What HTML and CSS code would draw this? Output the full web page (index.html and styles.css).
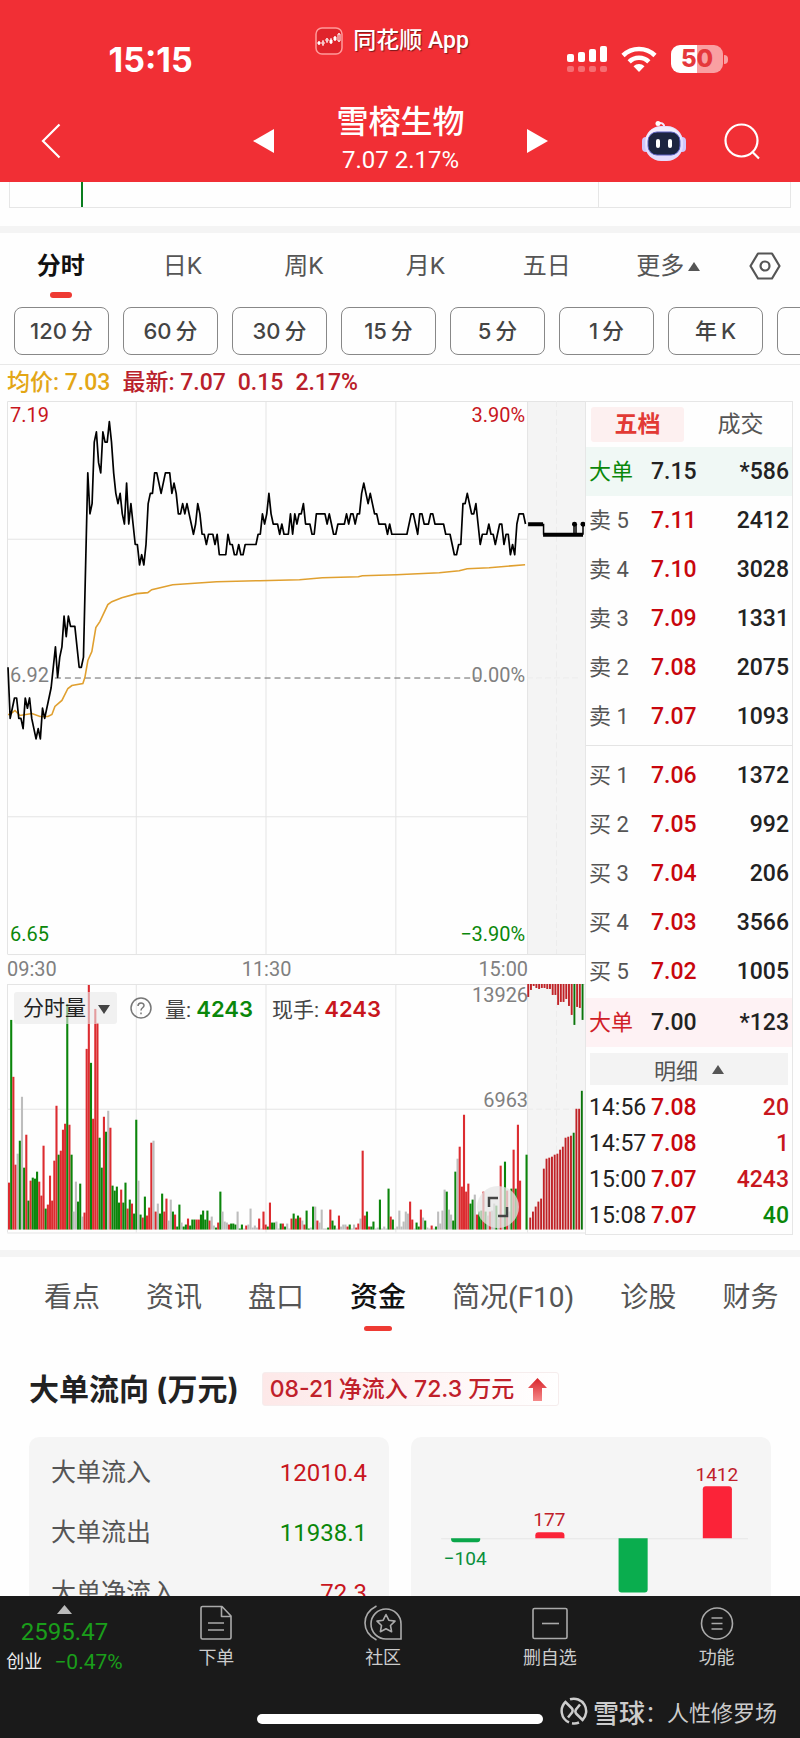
FILE: index.html
```html
<!DOCTYPE html>
<html lang="zh-CN">

<head>
  <meta charset="UTF-8">
  <meta name="viewport" content="width=device-width, initial-scale=1.0">
  <title>雪榕生物</title>
  <link rel="stylesheet" href="styles.css">
</head>

<body>
  <header class="header">
    <div class="status-bar">
      <span class="clock">15:15</span>
      <span class="app-label">
        <svg width="28" height="28" viewBox="0 0 28 28" fill="none">
          <rect x="1" y="1" width="26" height="26" rx="6" fill="#e0242b" stroke="#ff9a9a" stroke-width="1.5" />
          <g stroke="#fff" stroke-width="1">
            <path d="M4 14v4M8 13v6M12 11v5M16 11v6M20 9v5M24 6v9" />
            <path d="M3 15h2v2H3zM15 13h2v3h-2zM19 10h2v3h-2z" fill="#fff" />
            <path d="M7 15h2v2H7zM11 12h2v2h-2zM23 7h2v7h-2z" fill="#e0242b" />
          </g>
        </svg>
        同花顺 App
      </span>
      <span class="status-icons">
        <svg width="40" height="28" viewBox="0 0 40 28" fill="#fff">
          <rect x="0" y="9" width="7" height="8" rx="2" />
          <rect x="11" y="7" width="7" height="10" rx="2" />
          <rect x="22" y="4" width="7" height="13" rx="2" />
          <rect x="33" y="1" width="7" height="16" rx="2" />
          <g opacity=".3">
            <rect x="0" y="21" width="7" height="6" rx="2" />
            <rect x="11" y="21" width="7" height="6" rx="2" />
            <rect x="22" y="21" width="7" height="6" rx="2" />
            <rect x="33" y="21" width="7" height="6" rx="2" />
          </g>
        </svg>
        <svg width="36" height="28" viewBox="0 0 36 28" fill="none" stroke="#fff" stroke-width="4.6">
          <path d="M2 10.5a23 23 0 0 1 32 0" />
          <path d="M8.2 16.8a14 14 0 0 1 19.6 0" />
          <path d="M18 27l-5.5-5.7a8 8 0 0 1 11 0z" fill="#fff" stroke="none" />
        </svg>
        <span class="battery"><span class="battery-body">50</span></span>
      </span>
    </div>
    <nav class="title-bar">
      <button class="icon-button back" aria-label="返回">
        <svg width="20" height="36" viewBox="0 0 20 36" fill="none" stroke="#fff" stroke-width="2.2">
          <path d="M18.500 1.500L2 18l16.500 16.500" />
        </svg>
      </button>
      <div class="stock">
        <button class="icon-button" aria-label="上一只">
          <svg width="21" height="24" viewBox="0 0 21 24" fill="#fff"><path d="M0 12L21 0v24z" /></svg>
        </button>
        <div class="stock-title">
          <h1>雪榕生物</h1>
          <p>7.07 2.17%</p>
        </div>
        <button class="icon-button" aria-label="下一只">
          <svg width="21" height="24" viewBox="0 0 21 24" fill="#fff"><path d="M21 12L0 0v24z" /></svg>
        </button>
      </div>
      <div class="title-actions">
        <button class="icon-button" aria-label="助手">
          <svg width="44" height="42" viewBox="0 0 44 42">
            <path d="M22 8c1-5-4-6-6-4" fill="none" stroke="#f3e9ff" stroke-width="2" />
            <circle cx="16" cy="3.500" r="2.500" fill="#fff" />
            <rect x="0" y="17" width="8" height="15" rx="4" fill="#cfc6fb" />
            <rect x="36" y="17" width="8" height="15" rx="4" fill="#cfc6fb" />
            <rect x="3" y="6" width="38" height="35" rx="16" fill="#e4dcfd" />
            <rect x="4" y="7" width="35" height="28" rx="14" fill="#f2eefe" />
            <rect x="6" y="12" width="32" height="23" rx="9" fill="#1c2440" stroke="#5a5fc0" stroke-width="1" />
            <rect x="14" y="19" width="4" height="9" rx="2" fill="#fff" />
            <rect x="26" y="19" width="4" height="9" rx="2" fill="#fff" />
          </svg>
        </button>
        <button class="icon-button" aria-label="搜索">
          <svg width="36" height="37" viewBox="0 0 36 37" fill="none" stroke="#fff" stroke-width="2.2">
            <circle cx="17.500" cy="17.500" r="16" />
            <path d="M28 28.500l7 7" />
          </svg>
        </button>
      </div>
    </nav>
  </header>

  <main class="content">
    <div class="preview">
      <div class="preview-left"><span class="preview-bar"></span></div>
      <div class="preview-right"></div>
    </div>

    <nav class="period-tabs">
      <button class="period active">分时</button>
      <button class="period">日K</button>
      <button class="period">周K</button>
      <button class="period">月K</button>
      <button class="period">五日</button>
      <button class="period">更多<svg class="caret" width="12" height="9" viewBox="0 0 12 9"><path d="M6 0l6 9H0z" fill="#555" /></svg></button>
      <button class="icon-button settings" aria-label="设置">
        <svg width="32" height="28" viewBox="0 0 32 28" fill="none" stroke="#555" stroke-width="2.200">
          <path d="M9 1.500h14L30.500 14 23 26.500H9L1.500 14z" stroke-linejoin="round" />
          <circle cx="16" cy="14" r="4.500" />
        </svg>
      </button>
    </nav>

    <div class="chips">
      <button class="chip">120<span>分</span></button>
      <button class="chip">60<span>分</span></button>
      <button class="chip">30<span>分</span></button>
      <button class="chip">15<span>分</span></button>
      <button class="chip">5<span>分</span></button>
      <button class="chip">1<span>分</span></button>
      <button class="chip">年<span>K</span></button>
      <button class="chip" aria-label="更多周期"></button>
    </div>

    <p class="summary">
      <span class="average">均价: 7.03</span>
      <span>最新: 7.07</span>
      <span>0.15</span>
      <span>2.17%</span>
    </p>

    <section class="market">
      <div class="chart">
        <svg class="chart-svg" id="chart" viewBox="0 0 579 834">
          <rect x="521" y="0" width="58" height="554" fill="#f4f4f4" />
          <rect x="521" y="584" width="58" height="246" fill="#f4f4f4" />
          <g fill="none" stroke="#e4e4e4" stroke-width="1">
            <path d="M.5 .5H579M.5 138.500H521M.5 416.500H521M.5 554.500H579M.5 584.500H579M.5 709.500H521M.5 833.500H579" />
            <path d="M.5 .5V554M129.500 .5V554M259.500 .5V554M389.500 .5V554M521.500 .5V554" />
            <path d="M.5 584V833M129.500 584V833M259.500 584V833M389.500 584V833M521.500 584V833" />
            <path d="M521 277.500H575M521 709.500H575M550.500 0V554M550.500 584V830" stroke="#ececec" stroke-dasharray="6 3" />
          </g>
          <path d="M48 277.500H473" stroke="#666" stroke-width="1" stroke-dasharray="6 4" />
          <g id="volume"></g>
          <path fill="none" stroke="#e0a030" stroke-width="1.600" d="M1 314l2 0 5-4 5 5 12-2 8 3h8l4-2 3-8 7-6 6-12 4-3 11-2 2-6 3-17 4-9 4-24 4-6 8-17 4-3 10-4 15-4 11-1 4-3 21-5 44-3 43-1 40-1 23-2 36-1 4-1 34-1 43-2 20-2 8-2 22-1 36-3" />
          <path id="price" fill="none" stroke="#000" stroke-width="1.700" stroke-linejoin="round" />
          <path d="M522 123.500H537M537 134H577" fill="none" stroke="#000" stroke-width="4" />
          <path d="M537.500 123V134M568 123V134M570 123V134M577 123V134" fill="none" stroke="#000" stroke-width="1.500" />
          <circle cx="568.500" cy="123.500" r="2.500" />
          <circle cx="577" cy="123.500" r="2.500" />
          <g class="axis">
            <text class="up" x="3" y="21">7.19</text>
            <text class="up end" x="519" y="21">3.90%</text>
            <text x="3" y="281">6.92</text>
            <text class="end" x="519" y="281">0.00%</text>
            <text class="down" x="3" y="541">6.65</text>
            <text class="down end" x="519" y="541">−3.90%</text>
            <text x="0" y="576">09:30</text>
            <text class="middle" x="260" y="576">11:30</text>
            <text class="end" x="522" y="576">15:00</text>
            <text class="end" x="522" y="602">13926</text>
            <text class="end" x="522" y="707">6963</text>
          </g>
        </svg>

        <div class="indicator">
          <span class="select-wrap">
            <select class="indicator-select" aria-label="指标">
              <option>分时量</option>
            </select>
            <svg class="select-arrow" width="12" height="9" viewBox="0 0 12 9"><path d="M0 0h12L6 9z" fill="#444" /></svg>
          </span>
          <button class="icon-button" aria-label="说明">
            <svg width="22" height="22" viewBox="0 0 22 22" fill="none" stroke="#777" stroke-width="1.500">
              <circle cx="11" cy="11" r="10" />
              <path d="M8 9c0-4 6-4 6-.5 0 2.500-3 2-3 5M11 15.500v1.800" />
            </svg>
          </button>
          <span class="reading">量: <b class="down">4243</b></span>
          <span class="reading">现手: <b class="up">4243</b></span>
        </div>

        <button class="expand" aria-label="全屏">
          <svg width="22" height="22" viewBox="0 0 22 22" fill="none" stroke="#444" stroke-width="2.500">
            <path d="M2 11V2h9M20 11v9h-9" />
          </svg>
        </button>
      </div>

      <aside class="book">
        <div class="book-tabs">
          <button class="book-tab active">五档</button>
          <button class="book-tab">成交</button>
        </div>
        <table class="orders">
          <tbody>
            <tr class="big-sell"><th>大单</th><td>7.15</td><td>*586</td></tr>
            <tr><th>卖 5</th><td>7.11</td><td>2412</td></tr>
            <tr><th>卖 4</th><td>7.10</td><td>3028</td></tr>
            <tr><th>卖 3</th><td>7.09</td><td>1331</td></tr>
            <tr><th>卖 2</th><td>7.08</td><td>2075</td></tr>
            <tr><th>卖 1</th><td>7.07</td><td>1093</td></tr>
          </tbody>
        </table>
        <table class="orders bids">
          <tbody>
            <tr><th>买 1</th><td>7.06</td><td>1372</td></tr>
            <tr><th>买 2</th><td>7.05</td><td>992</td></tr>
            <tr><th>买 3</th><td>7.04</td><td>206</td></tr>
            <tr><th>买 4</th><td>7.03</td><td>3566</td></tr>
            <tr><th>买 5</th><td>7.02</td><td>1005</td></tr>
          </tbody>
        </table>
        <table class="orders big-bid">
          <tbody>
            <tr class="big-buy"><th>大单</th><td>7.00</td><td>*123</td></tr>
          </tbody>
        </table>
        <button class="detail-button">明细
          <svg width="12" height="9" viewBox="0 0 12 9"><path d="M6 0l6 9H0z" fill="#555" /></svg>
        </button>
        <table class="orders trades">
          <tbody>
            <tr><th>14:56</th><td>7.08</td><td class="up">20</td></tr>
            <tr><th>14:57</th><td>7.08</td><td class="up">1</td></tr>
            <tr><th>15:00</th><td>7.07</td><td class="up">4243</td></tr>
            <tr><th>15:08</th><td>7.07</td><td class="down">40</td></tr>
          </tbody>
        </table>
      </aside>
    </section>

    <nav class="info-tabs">
      <a href="#">看点</a>
      <a href="#">资讯</a>
      <a href="#">盘口</a>
      <a href="#" class="active">资金</a>
      <a href="#">简况(F10)</a>
      <a href="#">诊股</a>
      <a href="#">财务</a>
    </nav>

    <section class="flow">
      <div class="flow-head">
        <h2>大单流向 (万元)</h2>
        <span class="flow-badge">08-21 净流入 72.3 万元
          <svg width="19" height="23" viewBox="0 0 19 23">
            <defs>
              <linearGradient id="arrow" x1="0" y1="0" x2="0" y2="1">
                <stop offset="0" stop-color="#d8232a" />
                <stop offset="1" stop-color="#f58a8a" />
              </linearGradient>
            </defs>
            <path d="M9.500 0L19 10h-5v13H5V10H0z" fill="url(#arrow)" />
          </svg>
        </span>
      </div>
      <div class="cards">
        <dl class="card flow-list">
          <div><dt>大单流入</dt><dd class="up">12010.4</dd></div>
          <div><dt>大单流出</dt><dd class="down">11938.1</dd></div>
          <div><dt>大单净流入</dt><dd class="up">72.3</dd></div>
        </dl>
        <div class="card">
          <svg class="flow-chart" viewBox="0 0 359 170">
            <path d="M30 101.500H336" stroke="#e6e6e6" />
            <path d="M40 101h29v1q0 3-3 3H43q-3 0-3-3z" fill="#0aa64a" />
            <path d="M124 101v-3q0-3 3-3h23q3 0 3 3v3z" fill="#fb2338" />
            <path d="M207 101h29v51q0 3-3 3h-23q-3 0-3-3z" fill="#0aad4e" />
            <path d="M291 101V52q0-3 3-3h23q3 0 3 3v49z" fill="#fb2338" />
            <text class="green" x="54" y="128">−104</text>
            <text x="138" y="89">177</text>
            <text x="305" y="44">1412</text>
          </svg>
        </div>
      </div>
    </section>
  </main>

  <footer class="footer">
    <nav class="bottom-nav">
      <a href="#" class="index">
        <svg width="15" height="9" viewBox="0 0 15 9"><path d="M7.500 0L15 9H0z" fill="#bbb" /></svg>
        <span class="index-value">2595.47</span>
        <span class="index-row">创业 <span class="index-change">−0.47%</span></span>
      </a>
      <a href="#" class="nav-item">
        <svg width="36" height="36" viewBox="0 0 36 36" fill="none" stroke="#aaa" stroke-width="1.600" stroke-linejoin="round">
          <path d="M3 3q0-1.500 1.500-1.500H24L33 11v21.500q0 1.500-1.500 1.500h-27Q3 34 3 32.500zM23.500 2v9.500H33M10 18h16M10 25h16" />
        </svg>
        下单
      </a>
      <a href="#" class="nav-item">
        <svg width="38" height="36" viewBox="0 0 38 36" fill="none" stroke="#aaa" stroke-width="1.600">
          <path d="M12.500 1Q1 7 1 18t11.500 17M22 4a15 15 0 0 1 15 15v15H22a15 15 0 0 1 0-30z" />
          <path d="M22 9.500l2.800 5.700 6.200.9-4.500 4.400 1.100 6.200-5.600-3-5.600 3 1.100-6.200-4.500-4.400 6.200-.9z" stroke-linejoin="round" />
        </svg>
        社区
      </a>
      <a href="#" class="nav-item">
        <svg width="36" height="36" viewBox="0 0 36 36" fill="none" stroke="#aaa" stroke-width="1.600">
          <rect x="1" y="3.500" width="34" height="30" rx="1.500" />
          <path d="M10 18.500h17" />
        </svg>
        删自选
      </a>
      <a href="#" class="nav-item">
        <svg width="36" height="36" viewBox="0 0 36 36" fill="none" stroke="#aaa" stroke-width="1.600">
          <circle cx="18" cy="18.500" r="15.500" />
          <path d="M12.500 13h11M12.500 18.500h11M12.500 24h11" />
        </svg>
        功能
      </a>
    </nav>
    <div class="footer-bottom">
      <span class="home-bar"></span>
      <span class="watermark">
        <svg width="28" height="28" viewBox="0 0 28 28" fill="none" stroke="#ccc" stroke-width="2.500">
          <path d="M9 25.400A12.500 12.500 0 0 1 5.500 5L11.500 11q2 2 .5 4.500l-4 5" />
          <path d="M10 2.200A12.500 12.500 0 0 1 22.500 23L16.500 17q-2-2-.5-4.500l4-5M19 25.500a12.500 12.500 0 0 1-7 .8" />
        </svg>
        <b>雪球</b>：人性修罗场
      </span>
    </div>
  </footer>

  <script src="chart.js"></script>
</body>

</html>
```
FILE: styles.css
```css
* {
  box-sizing: border-box;
}

body {
  display: flex;
  flex-direction: column;
  height: 100vh;
  margin: 0;
  background-color: #fefefe;
  color: #222;
  font-family: Roboto, "Noto Sans CJK SC", sans-serif;
  font-size: 22px;
}

h1, h2, p, dl, dd {
  margin: 0;
}

button {
  padding: 0;
  border: none;
  background: none;
  color: inherit;
  font: inherit;
  cursor: pointer;
}

a {
  color: inherit;
  text-decoration: none;
}

svg {
  display: block;
}

.up {
  color: #c8161d;
  fill: #c8161d;
}

.down {
  color: #0a870a;
  fill: #0a870a;
}

/* header */

.header {
  flex: none;
  background-color: #f12f35;
  color: #fff;
}

.status-bar {
  display: grid;
  grid-template-columns: 1fr auto 1fr;
  height: 86px;
  padding: 24px 16px 0 0;
}

.clock {
  padding: 16px 14px 0 0;
  font-family: Inter, sans-serif;
  font-size: 34px;
  font-weight: 700;
  line-height: 40px;
  text-align: center;
}

.app-label {
  display: flex;
  gap: 10px;
  height: 34px;
  align-items: center;
  font-size: 23px;
  font-weight: 500;
  line-height: 30px;
  text-shadow: 1px 1px 1px #7a1a1c;
}

.status-icons {
  display: flex;
  justify-content: flex-end;
  gap: 14px;
  padding: 21px 56px 0 0;
}

.battery {
  display: flex;
  align-items: center;
  gap: 1px;
  height: 28px;
}

.battery::after {
  content: "";
  width: 4px;
  height: 9px;
  border-radius: 0 4px 4px 0;
  background-color: #f9a0a2;
}

.battery-body {
  width: 52px;
  border-radius: 9px;
  background: linear-gradient(90deg, #fff 50%, #f9a0a2 50%);
  color: #e5383c;
  font-family: Inter, sans-serif;
  font-size: 24px;
  font-weight: 800;
  line-height: 28px;
  text-align: center;
}

.title-bar {
  display: grid;
  grid-template-columns: 1fr 296px 1fr;
  align-items: center;
  height: 96px;
  padding: 16px 40px 2px 41px;
}

.stock {
  display: flex;
  align-items: center;
  justify-content: space-between;
}

.stock-title {
  text-align: center;
}

.stock h1 {
  font-size: 32px;
  font-weight: 500;
  line-height: 38px;
}

.stock p {
  font-size: 24px;
  line-height: 38px;
}

.title-actions {
  display: flex;
  align-items: center;
  justify-content: flex-end;
  gap: 38px;
}

/* content */

.content {
  flex: 1;
  min-height: 0;
  overflow: hidden;
}

.preview {
  display: grid;
  grid-template-columns: 589fr 191fr;
  height: 26px;
  margin: 0 9px 18px;
  border: 1px solid #e6e6e6;
  border-top: none;
}

.preview-left {
  padding-left: 71px;
  border-right: 1px solid #e6e6e6;
}

.preview-bar {
  display: block;
  width: 2px;
  height: 25px;
  background-color: #0a7d1e;
}

.period-tabs {
  display: grid;
  grid-template-columns: repeat(6, 1fr) 71px;
  padding-top: 17px;
  border-top: 7px solid #f4f4f4;
}

.period {
  display: flex;
  justify-content: center;
  align-items: center;
  height: 32px;
  margin-bottom: 16px;
  color: #555;
  font-size: 24px;
  line-height: 32px;
}

.period.active {
  position: relative;
  color: #111;
  font-weight: 700;
}

.period.active::after {
  content: "";
  position: absolute;
  top: 42px;
  width: 22px;
  height: 6px;
  border-radius: 3px;
  background-color: #ee3a33;
}

.caret {
  margin-left: 4px;
}

.settings {
  display: grid;
  place-items: center;
  height: 32px;
}

.chips {
  display: flex;
  gap: 14px;
  padding: 9px 0 9px 14px;
  overflow: hidden;
  border-bottom: 1px solid #e8e8e8;
}

.chip {
  display: flex;
  flex: 0 0 95px;
  align-items: center;
  justify-content: center;
  gap: 4px;
  height: 48px;
  border: 1px solid #888;
  border-radius: 8px;
  color: #444;
  font-family: Inter, "Noto Sans CJK SC", sans-serif;
  font-weight: 500;
  line-height: 30px;
}

.summary {
  display: flex;
  gap: 12px;
  padding-left: 7px;
  color: #b9202a;
  font-family: Roboto, "Noto Sans CJK SC", sans-serif;
  font-size: 23px;
  font-weight: 500;
  line-height: 36px;
}

.average {
  color: #e3a615;
}

.market {
  display: grid;
  grid-template-columns: minmax(0, 1fr) 208px;
  padding: 0 7px 15px 7px;
}

.chart {
  position: relative;
}

.chart-svg {
  width: 100%;
}

.axis {
  font-size: 20px;
}

.axis text:not(.up, .down) {
  fill: #808080;
}

.axis .end {
  text-anchor: end;
}

.axis .middle {
  text-anchor: middle;
}

.indicator {
  position: absolute;
  top: 590px;
  left: 7px;
  display: flex;
  align-items: center;
  gap: 13px;
  height: 34px;
  color: #444;
  font-size: 21px;
}

.reading {
  padding-right: 6px;
}

.indicator b {
  font-family: Inter, sans-serif;
  font-size: 22px;
  font-weight: 600;
}

.select-wrap {
  position: relative;
}

.indicator-select {
  width: 103px;
  height: 32px;
  padding: 0 0 0 9px;
  border: none;
  border-radius: 3px;
  background-color: rgba(232, 232, 232, 0.6);
  color: #222;
  font: inherit;
  appearance: none;
}

.select-arrow {
  position: absolute;
  top: 13px;
  right: 7px;
  pointer-events: none;
}

.expand {
  position: absolute;
  right: 66px;
  bottom: 7px;
  display: grid;
  place-items: center;
  width: 42px;
  height: 42px;
  border-radius: 50%;
  background-color: rgba(230, 230, 230, 0.75);
}

.book {
  border: 1px solid #e6e6e6;
}

.book-tabs {
  display: flex;
  gap: 10px;
  padding: 5px;
  font-size: 23px;
}

.book-tab {
  flex: 1;
  height: 35px;
  border-radius: 3px;
  color: #555;
  line-height: 35px;
}

.book-tab.active {
  background-color: #fdf0f0;
  color: #e23a35;
  font-weight: 700;
}

.orders {
  width: 100%;
  border-spacing: 0;
  table-layout: fixed;
  font-size: 23px;
}

.orders th,
.orders td {
  height: 49px;
  padding: 0;
  font-weight: 500;
  line-height: 30px;
  text-align: left;
}

.orders th {
  width: 65px;
  padding-left: 3px;
  color: #555;
  font-size: 22px;
  font-weight: 400;
}

.orders td:nth-child(2) {
  width: 52px;
  color: #c8060d;
}

.orders td:last-child {
  padding-right: 3px;
  text-align: right;
}

.orders .big-sell {
  background-color: #f0f8f5;
}

.orders .big-buy {
  background-color: #fef2f4;
}

.orders .big-sell th {
  color: #0a870a;
}

.orders .big-buy th {
  color: #d02027;
}

.orders .big-sell td:nth-child(2),
.orders .big-buy td:nth-child(2) {
  color: #222;
}

.bids {
  margin-top: 4px;
  padding-top: 5px;
  border-top: 1px solid #e4e4e4;
}

.big-bid {
  margin-top: 2px;
}

.detail-button {
  display: flex;
  align-items: center;
  justify-content: center;
  gap: 14px;
  width: calc(100% - 8px);
  height: 32px;
  margin: 6px 4px 5px;
  background-color: #f3f3f3;
  color: #555;
}

.orders.trades th,
.orders.trades td {
  height: 36px;
}

.orders.trades th {
  color: #222;
  font-size: 23px;
}

/* info tabs */

.info-tabs {
  display: flex;
  gap: 46px;
  padding: 23px 0 15px 44px;
  overflow: hidden;
  border-top: 7px solid #f4f4f4;
  color: #555;
  font-size: 28px;
  line-height: 36px;
  white-space: nowrap;
}

.info-tabs .active {
  position: relative;
  color: #111;
  font-weight: 500;
}

.info-tabs .active::after {
  content: "";
  position: absolute;
  top: 46px;
  left: calc(50% - 14px);
  width: 28px;
  height: 5px;
  border-radius: 3px;
  background-color: #ee3a33;
}

/* capital flow */

.flow {
  padding: 41px 29px 0;
}

.flow-head {
  display: flex;
  align-items: center;
  gap: 23px;
}

.flow-head h2 {
  font-family: Inter, "Noto Sans CJK SC", sans-serif;
  font-size: 30px;
  font-weight: 700;
  line-height: 34px;
}

.flow-badge {
  display: flex;
  align-items: center;
  gap: 14px;
  height: 34px;
  padding: 0 11px 0 7px;
  border: 1px solid #f6eded;
  border-radius: 3px;
  background: linear-gradient(90deg, #fde8e8, #fff);
  color: #c0202a;
  font-family: Inter, "Noto Sans CJK SC", sans-serif;
  font-size: 23px;
  font-weight: 500;
  line-height: 30px;
}

.cards {
  display: grid;
  grid-template-columns: 1fr 1fr;
  gap: 22px;
  margin-top: 31px;
}

.card {
  height: 260px;
  border-radius: 10px;
  background-color: #f5f5f5;
}

.flow-list {
  padding: 6px 22px 0;
  font-size: 25px;
}

.flow-list div {
  display: flex;
  justify-content: space-between;
  line-height: 60px;
}

.flow-list dt {
  color: #555;
}

.flow-list dd {
  font-size: 24px;
}

.flow-chart {
  width: 100%;
  font-size: 19px;
  text-anchor: middle;
  fill: #c0202a;
}

.flow-chart .green {
  fill: #0a8f3c;
}

/* footer */

.footer {
  flex: none;
  height: 142px;
  background-color: #1a1a1a;
  color: #ccc;
}

.bottom-nav {
  display: grid;
  grid-template-columns: 133px repeat(4, 1fr);
  height: 90px;
  padding-top: 9px;
  font-size: 18px;
}

.index {
  display: flex;
  flex-direction: column;
  align-items: center;
  padding-right: 4px;
}

.index-value {
  color: #1a9e1a;
  font-size: 24px;
  line-height: 36px;
}

.index-row {
  display: flex;
  align-items: center;
  gap: 12px;
  line-height: 24px;
  color: #eee;
}

.index-change {
  color: #1a9e1a;
  font-size: 21px;
}

.nav-item {
  display: flex;
  flex-direction: column;
  align-items: center;
  gap: 5px;
  line-height: 24px;
}

.footer-bottom {
  display: grid;
  grid-template-columns: 1fr 286px 1fr;
  padding-top: 8px;
}

.home-bar {
  grid-column: 2;
  height: 10px;
  margin-top: 20px;
  border-radius: 5px;
  background-color: #fff;
}

.watermark {
  display: flex;
  align-items: center;
  height: 34px;
  padding-left: 17px;
  white-space: nowrap;
}

.watermark b {
  margin-left: 5px;
  font-size: 26px;
  font-weight: 500;
}
```
FILE: chart.js
```js
const STEP = 2.16;
const BASE_Y = 277;
const CENT = 10.25;
const VOLUME_TOP = 584;
const VOLUME_BOTTOM = 830;

// minute:cents above the previous close, at each turning point
const prices = `0:1 1:-4 2:-3 3:-2 4:-2 5:-4 6:-4 7:-5 8:-2 9:-3 10:-2 11:-4 13:-6 14:-5 15:-6 16:-3 17:-4
19:-2 20:-1 22:3 23:0 24:2 25:3 26:6 27:4 28:6 29:5 31:5 33:1 34:1 35:2 37:20 38:16 39:17 40:23 41:24
42:21 43:20 44:24 45:23 46:23 47:25 48:23 49:20 50:18 51:17 52:18 53:16 54:15 55:19 56:15 57:17 58:15
59:13 60:13 61:11 62:12 63:11 64:13 65:17 66:18 67:18 68:20 69:20 70:19 71:18 72:19 73:20 75:20 76:18
77:19 78:18 79:16 80:16 81:17 82:16 83:17 84:16 85:15 86:14 87:15 88:17 89:16 90:14 91:14 92:13 93:14
95:14 96:13 97:14 98:12 101:12 102:14 103:13 104:13 105:12 106:12 107:13 108:12 109:12 110:13 115:13
116:14 117:14 118:16 119:15 120:16 121:18 122:16 123:15 125:15 126:14 127:15 128:14 130:14 131:16
132:14 133:16 134:15 135:16 136:16 137:17 138:15 140:15 141:14 142:14 143:16 147:16 148:15 149:16
150:15 151:14 152:14 153:15 156:15 157:16 158:15 159:16 160:16 161:15 162:16 163:16 164:18 165:19
166:18 167:17 168:18 169:17 170:16 171:16 172:15 175:15 176:14 177:15 178:14 185:14 187:16 188:16
190:14 191:16 192:16 193:15 195:15 196:16 197:16 198:15 202:15 203:14 205:14 206:13 207:12 208:12
209:13 210:13 211:17 212:17 213:18 214:17 215:16 216:16 217:17 218:15 219:13 220:14 222:14 223:15
224:14 225:14 226:13 228:15 229:15 230:13 231:14 232:14 233:12 234:13 235:12 236:15 237:16 239:16
240:15`;

// one bar per minute: r = up, g = down, n = unchanged
const volumes = `r47 g210 r153 r65 n76 g89 n133 g62 r95 g29 r49 g52 g51 g58 r48 r34 r84 g21 r25 r54 r29
r69 r124 g75 r79 r100 r106 g226 r105 g75 n18 n48 g28 g46 n13 r17 r181 r245 g167 r111 r221 r207 g92 g62
r113 g98 n119 r102 g44 g39 g43 g27 r40 g27 g47 r21 g30 r26 g16 g110 n49 g15 r12 g33 r14 r22 r87 n89 r18
n26 g16 g36 r18 r31 n9 n30 g18 r15 g3 g25 n7 g3 g5 r11 g4 g10 g10 r10 r10 g15 g19 g10 g19 r9 n13 n4 g2
r7 g38 n18 n8 n7 r5 g6 g6 g5 n18 g1 g5 n1 r4 n5 n21 n2 n4 n2 r11 n1 r18 r5 g3 r27 g7 g7 n8 n1 g6 r6 g3
n6 n1 r11 g16 r11 g14 r12 n9 r5 g19 g1 n2 g23 n23 r9 n7 n20 n1 n1 g2 r20 g9 g4 n1 r14 n3 n5 n5 r3 g5 n1
n5 r2 r6 n11 r79 r14 g18 r3 g3 g8 n1 n2 g30 n1 n3 n1 g41 r13 g10 n1 n3 n19 n3 n8 n18 n16 r28 r10 n1 g7
g3 r20 n12 g9 n2 n1 r4 n1 g3 n18 n6 n19 n40 g38 n20 n15 g9 g58 n71 r83 r43 r115 r38 r46 g26 g30 n35 r15
g18 g19 r38 g18 n14 r18 n19 n26 g24 n11 r64 n14 g68 r39 n18 g41 r80 g41 r105 r49 n0 n0 g75`;

// after-hours session: total at the bottom, remaining at the top
const afterTotal = `r12 r18 r23 r28 r31 r61 r71 r72 r73 r75 r76 r80 r83 r92 r93 r94 g97 r121 r121 g139`;
const afterLeft = `r13 r6 r2 r4 r5 r4 r4 r5 r5 r11 r11 r21 r18 r18 r15 r22 r31 g41 r23 r24 g36`;

const colors = { r: "#dc2c30", g: "#0b850b", n: "#bdbdbd" };
const afterColors = { r: "#c02226", g: "#0b750b" };

function parseBars(text) {
  return text.trim().split(/\s+/).map(item => ({ type: item[0], size: Number(item.slice(1)) }));
}

function bar(x, y, width, height, color) {
  return `<rect x="${x.toFixed(2)}" y="${y}" width="${width}" height="${height}" fill="${color}"/>`;
}

const line = prices.trim().split(/\s+/).map(item => {
  const [minute, cents] = item.split(":").map(Number);
  return `${(1 + minute * STEP).toFixed(2)} ${BASE_Y - cents * CENT}`;
});
document.getElementById("price").setAttribute("d", "M" + line.join("L"));

let html = parseBars(volumes).map((v, i) =>
  bar(1 + i * STEP, VOLUME_BOTTOM - v.size, 2.1, v.size, colors[v.type])).join("");

html += parseBars(afterTotal).map((v, i) =>
  bar(523.2 + i * 2.72, VOLUME_BOTTOM - v.size, 1.9, v.size, afterColors[v.type])).join("");

html += parseBars(afterLeft).map((v, i) =>
  bar(521.2 + i * 2.72, VOLUME_TOP, 1.9, v.size, afterColors[v.type])).join("");

document.getElementById("volume").innerHTML = html;
```
